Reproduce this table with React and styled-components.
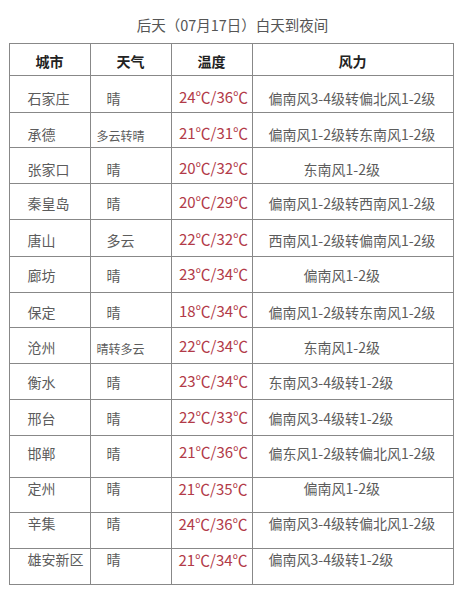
import React from 'react'
import styled, { createGlobalStyle } from 'styled-components'

const GlobalStyle = createGlobalStyle`
    html, body {
        margin: 0;
        padding: 0;
        background: #ffffff;
    }
    body {
        font-family: "Noto Sans CJK SC", "Noto Sans", sans-serif;
    }
`

const Page = styled.div`
    width: 464px;
    display: flex;
    flex-direction: column;
    align-items: center;
    padding-top: 14px;
`

const Title = styled.h2`
    margin: 0 0 7px 0;
    font-size: 14.5px;
    font-weight: 400;
    line-height: 22px;
    color: #555;
    letter-spacing: 0;
    padding-left: 1px;
`

const Table = styled.table`
    width: 444px;
    margin-left: -2px;
    border-collapse: collapse;
    table-layout: fixed;
    border: 1px solid #888;
`

const HeadRow = styled.tr`
    height: 32px;
`

const Th = styled.th`
    border: 1px solid #888;
    padding: 3px 0 0 0;
    font-size: 14px;
    font-weight: 700;
    line-height: 20px;
    color: #222;
    text-align: center;
    vertical-align: middle;
`

const Row = styled.tr`
    height: ${p => p.$height}px;
`

const Td = styled.td`
    border: 1px solid #888;
    padding: ${p => p.$top}px 0 0 ${p => p.$indent || 0}px;
    font-size: ${p => p.$small ? 12 : 14}px;
    line-height: 20px;
    color: #5c5c5c;
    text-align: ${p => p.$center ? 'center' : 'left'};
    vertical-align: top;
    white-space: nowrap;
    overflow: hidden;
`

const Temp = styled(Td)`
    color: #b23a48;
    font-size: 15px;
    padding-left: 4px;
`

const rows = [
    { city: '石家庄', weather: '晴', temp: '24℃/36℃', wind: '偏南风3-4级转偏北风1-2级', h: 37, top: 12 },
    { city: '承德', weather: '多云转晴', temp: '21℃/31℃', wind: '偏南风1-2级转东南风1-2级', h: 35, top: 11 },
    { city: '张家口', weather: '晴', temp: '20℃/32℃', wind: '东南风1-2级', short: true, h: 36, top: 11 },
    { city: '秦皇岛', weather: '晴', temp: '20℃/29℃', wind: '偏南风1-2级转西南风1-2级', h: 36, top: 9 },
    { city: '唐山', weather: '多云', temp: '22℃/32℃', wind: '西南风1-2级转偏南风1-2级', h: 37, top: 10 },
    { city: '廊坊', weather: '晴', temp: '23℃/34℃', wind: '偏南风1-2级', short: true, h: 36, top: 8 },
    { city: '保定', weather: '晴', temp: '18℃/34℃', wind: '偏南风1-2级转东南风1-2级', h: 35, top: 9 },
    { city: '沧州', weather: '晴转多云', temp: '22℃/34℃', wind: '东南风1-2级', short: true, h: 36, top: 9 },
    { city: '衡水', weather: '晴', temp: '23℃/34℃', wind: '东南风3-4级转1-2级', h: 36, top: 8 },
    { city: '邢台', weather: '晴', temp: '22℃/33℃', wind: '偏南风3-4级转1-2级', h: 36, top: 8 },
    { city: '邯郸', weather: '晴', temp: '21℃/36℃', wind: '偏东风1-2级转偏北风1-2级', h: 42, top: 7 },
    { city: '定州', weather: '晴', temp: '21℃/35℃', wind: '偏南风1-2级', short: true, h: 35, top: 0 },
    { city: '辛集', weather: '晴', temp: '24℃/36℃', wind: '偏南风3-4级转偏北风1-2级', h: 36, top: 0 },
    { city: '雄安新区', weather: '晴', temp: '21℃/34℃', wind: '偏南风3-4级转1-2级', h: 36, top: 0 },
]

export default function App() {
    return (
        <Page>
            <GlobalStyle />
            <Title>后天（07月17日）白天到夜间</Title>
            <Table>
                <colgroup>
                    <col style={{ width: 81 }} />
                    <col style={{ width: 81 }} />
                    <col style={{ width: 81 }} />
                    <col style={{ width: 201 }} />
                </colgroup>
                <thead>
                    <HeadRow>
                        <Th>城市</Th>
                        <Th>天气</Th>
                        <Th>温度</Th>
                        <Th>风力</Th>
                    </HeadRow>
                </thead>
                <tbody>
                    {rows.map(r => {
                        const small = r.weather.length > 2
                        return (
                            <Row key={r.city} $height={r.h}>
                                <Td $top={r.top} $indent={18}>{r.city}</Td>
                                <Td $top={r.top + (small ? 2 : 0)} $indent={small ? 6 : 16} $small={small}>{r.weather}</Td>
                                <Temp $top={r.top - 1} $center>{r.temp}</Temp>
                                <Td $top={r.top} $indent={r.short ? 51 : 16}>{r.wind}</Td>
                            </Row>
                        )
                    })}
                </tbody>
            </Table>
        </Page>
    )
}
